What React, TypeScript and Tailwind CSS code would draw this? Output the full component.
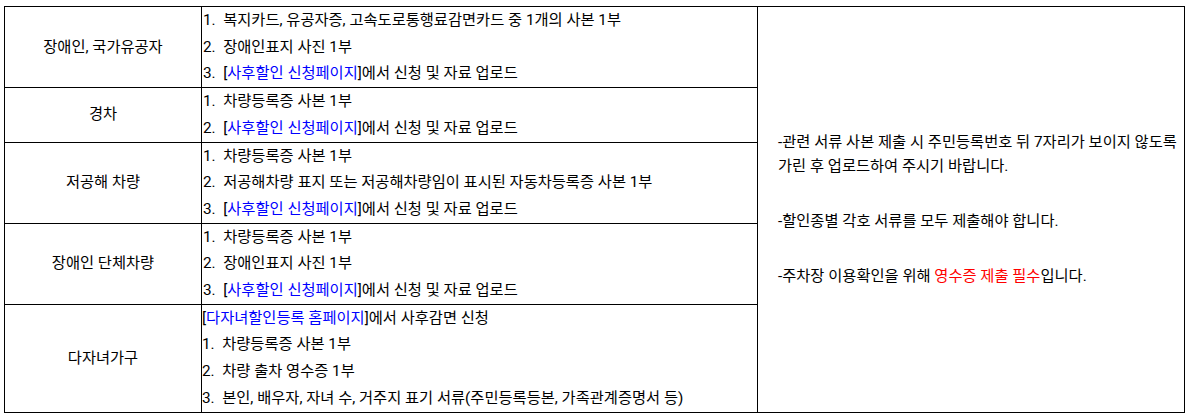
import React from "react";

const Link = ({ children }: { children: React.ReactNode }) => (
  <span className="text-[#0000ff]">{children}</span>
);

const Line = ({ children }: { children: React.ReactNode }) => (
  <div className="leading-[26.7px] whitespace-pre">{children}</div>
);

const upload = (n: string) => (
  <Line>
    {n}.  [<Link>사후할인 신청페이지</Link>]에서 신청 및 자료 업로드
  </Line>
);

export default function App() {
  const td1 = "border border-black text-center align-middle p-0";
  const td2 = "border border-black align-top pl-[1px] pr-0 py-0";
  return (
    <div
      className="bg-white w-[1188px] h-[419px] pt-[6px] pl-[4px] text-black text-[15.3px]"
      style={{ fontFamily: 'Roboto, "Noto Sans CJK KR", sans-serif' }}
    >
      <table className="border-collapse table-fixed w-[1180px]">
        <colgroup>
          <col className="w-[197px]" />
          <col className="w-[556px]" />
          <col className="w-[427px]" />
        </colgroup>
        <tbody>
          <tr>
            <td className={td1}>장애인, 국가유공자</td>
            <td className={td2}>
              <Line>1.  복지카드, 유공자증, 고속도로통행료감면카드 중 1개의 사본 1부</Line>
              <Line>2.  장애인표지 사진 1부</Line>
              {upload("3")}
            </td>
            <td rowSpan={5} className="border border-black align-middle pl-[20px] pr-[4px] break-keep">
              <div className="flex flex-col gap-[31px]">
                <p className="leading-[24px]">
                  -관련 서류 사본 제출 시 주민등록번호 뒤 7자리가 보이지 않도록 가린 후 업로드하여 주시기 바랍니다.
                </p>
                <p className="leading-[24px]">-할인종별 각호 서류를 모두 제출해야 합니다.</p>
                <p className="leading-[24px]">
                  -주차장 이용확인을 위해 <span className="text-[#ff0000]">영수증 제출 필수</span>입니다.
                </p>
              </div>
            </td>
          </tr>
          <tr>
            <td className={td1}>경차</td>
            <td className={td2}>
              <Line>1.  차량등록증 사본 1부</Line>
              {upload("2")}
            </td>
          </tr>
          <tr>
            <td className={td1}>저공해 차량</td>
            <td className={td2}>
              <Line>1.  차량등록증 사본 1부</Line>
              <Line>2.  저공해차량 표지 또는 저공해차량임이 표시된 자동차등록증 사본 1부</Line>
              {upload("3")}
            </td>
          </tr>
          <tr>
            <td className={td1}>장애인 단체차량</td>
            <td className={td2}>
              <Line>1.  차량등록증 사본 1부</Line>
              <Line>2.  장애인표지 사진 1부</Line>
              {upload("3")}
            </td>
          </tr>
          <tr>
            <td className={td1}>다자녀가구</td>
            <td className="border border-black align-top p-0">
              <Line>
                [<Link>다자녀할인등록 홈페이지</Link>]에서 사후감면 신청
              </Line>
              <Line>1.  차량등록증 사본 1부</Line>
              <Line>2.  차량 출차 영수증 1부</Line>
              <Line>3.  본인, 배우자, 자녀 수, 거주지 표기 서류(주민등록등본, 가족관계증명서 등)</Line>
            </td>
          </tr>
        </tbody>
      </table>
    </div>
  );
}
